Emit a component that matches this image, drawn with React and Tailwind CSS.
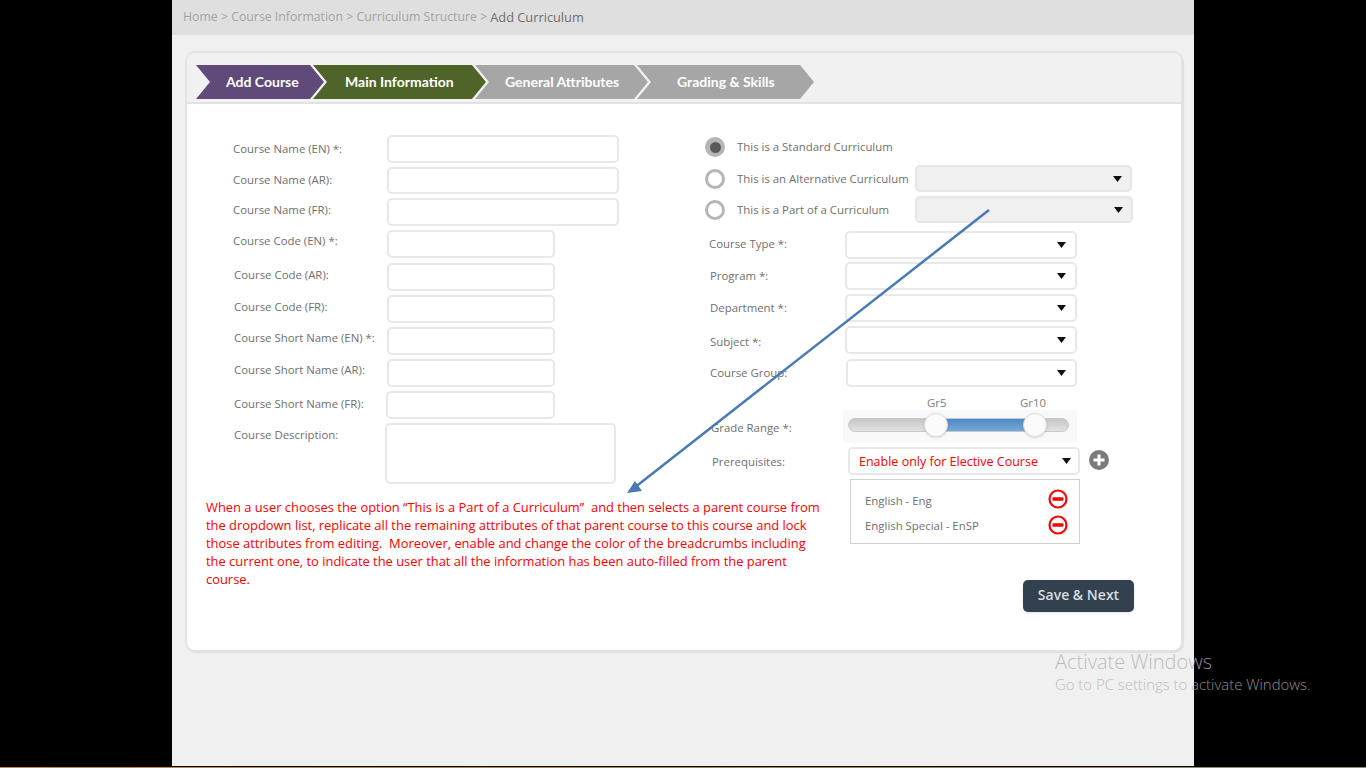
const lbl = "font-['Open_Sans',sans-serif] text-[11.400px] text-[#6f6f6f]";

const Caret = () => (
  <svg width="9" height="6" viewBox="0 0 9 6" className="shrink-0"><path d="M0 0H9L4.500 6Z" fill="#111" /></svg>
);

const Field = ({ w, h = 28, sel, grey, children }) => (
  <div style={{ width: w, height: h }} className={`flex shrink-0 items-center justify-end rounded-[5px] border-2 ${grey ? "border-[#e6e6e6] bg-[#f0f0f0] pr-[8px]" : "border-[#e8e8e8] bg-white"} ${sel && !grey ? (children ? "pr-[7px]" : "pr-[9px]") : ""}`}>
    {children}
    {sel && <Caret />}
  </div>
);

const LeftRow = ({ label, w, lx, fx, h = 28, top = 4, mt }) => (
  <div className="flex items-start" style={{ marginTop: mt }}>
    <div style={{ width: 181 + fx, paddingLeft: lx }} className="shrink-0">
      <div className={`${lbl} whitespace-nowrap leading-[16px]`} style={{ marginTop: top }}>{label}</div>
    </div>
    <Field w={w} h={h} />
  </div>
);

const Radio = ({ on }) => (
  <div className={`flex h-5 w-5 shrink-0 items-center justify-center rounded-full border-[3px] border-[#b5b5b5] ${on ? "bg-[#b5b5b5]" : "bg-white"}`}>
    {on && <div className="h-[11px] w-[11px] rounded-full bg-[#5a5a5a]" />}
  </div>
);

const RightRow = ({ label, lx, fx, w, mt, pt = 0, pb = 0 }) => (
  <div className="flex items-center" style={{ marginTop: mt }}>
    <div style={{ width: fx, paddingLeft: lx, paddingTop: pt, paddingBottom: pb }} className={`${lbl} shrink-0 whitespace-nowrap`}>{label}</div>
    <Field w={w} sel />
  </div>
);

const chevron = "polygon(0 0,calc(100% - 14px) 0,100% 50%,calc(100% - 14px) 100%,0 100%,14px 50%)";

const Step = ({ label, w, color, first, pl }) => (
  <div
    style={{ width: w, clipPath: chevron, paddingLeft: pl, marginLeft: first ? 0 : -11 }}
    className={`flex h-[34px] shrink-0 items-center pb-[2px] ${color} font-['Lato',sans-serif] text-[14px] font-bold text-white`}
  >
    {label}
  </div>
);

const MinusIcon = () => (
  <svg width="20" height="20" viewBox="0 0 20 20" className="shrink-0"><circle cx="10" cy="10" r="8.500" fill="white" stroke="#f00" strokeWidth="2.200" /><rect x="4.500" y="8.200" width="11" height="3.600" rx="0.800" fill="#f00" /></svg>
);

const redLines = [
  "When a user chooses the option “This is a Part of a Curriculum”  and then selects a parent course from",
  "the dropdown list, replicate all the remaining attributes of that parent course to this course and lock",
  "those attributes from editing.  Moreover, enable and change the color of the breadcrumbs including",
  "the current one, to indicate the user that all the information has been auto-filled from the parent",
  "course.",
];

export default function App() {
  return (
    <div className="relative flex h-[768px] w-full justify-center overflow-hidden bg-black">
      <div className="relative flex h-[766px] w-[1022px] flex-col bg-[#f0f0f0]">
        <div className="flex h-[35px] items-center bg-[#dfdfdf] pl-[11px] font-['Open_Sans',sans-serif] text-[#a3a3a3]">
          <span className="text-[12.300px]">Home &gt; Course Information &gt; Curriculum Structure &gt; </span>
          <span className="ml-[3px] text-[12.800px] text-[#6e6e6e]">Add Curriculum</span>
        </div>

        <div className="ml-[13px] mt-4 h-[601px] w-[998px] overflow-hidden rounded-[10px] border-2 border-[#e3e3e3] bg-white shadow-[1px_1px_1px_rgba(0,0,0,0.08)]">
          <div className="flex h-[51px] items-start border-b-2 border-[#e2e2e2] bg-[#f1f1f1] pl-[9px] pt-[12px]">
            <Step first label="Add Course" w={128} pl={30} color="bg-[#5f4a7a]" />
            <Step label="Main Information" w={173} pl={32} color="bg-[#4f6428]" />
            <Step label="General Attributes" w={173} pl={30} color="bg-[#a6a6a6]" />
            <Step label="Grading & Skills" w={177} pl={40} color="bg-[#a6a6a6]" />
          </div>

          <div className="flex items-start">
            <div className="w-[500px] shrink-0 pl-[19px] pt-[31px]">
              <LeftRow label="Course Name (EN) *:" lx={27} fx={0} w={232} top={6} />
              <LeftRow label="Course Name (AR):" lx={27} fx={0} w={232} h={27} mt={4} top={5} />
              <LeftRow label="Course Name (FR):" lx={27} fx={0} w={232} mt={4} />
              <LeftRow label="Course Code (EN) *:" lx={27} fx={0} w={168} mt={4} top={3} />
              <LeftRow label="Course Code (AR):" lx={28} fx={0} w={168} mt={5} />
              <LeftRow label="Course Code (FR):" lx={28} fx={0} w={168} mt={4} />
              <LeftRow label="Course Short Name (EN) *:" lx={28} fx={0} w={168} mt={4} top={3} />
              <LeftRow label="Course Short Name (AR):" lx={28} fx={0} w={168} mt={4} top={3} />
              <LeftRow label="Course Short Name (FR):" lx={28} fx={-1} w={169} mt={4} top={5} />
              <LeftRow label="Course Description:" lx={28} fx={-2} w={231} h={61} mt={4} top={4} />
              <div className="mt-[14px] whitespace-pre font-['Open_Sans',sans-serif] text-[12.920px] leading-[18px] text-[#f00]">
                {redLines.map((t) => <div key={t}>{t}</div>)}
              </div>
            </div>

            <div className="w-[480px] shrink-0 pl-[17px] pt-[33px]">
              <div className="flex items-center gap-[12px] pl-[1px]"><Radio on /><span className={lbl}>This is a Standard Curriculum</span></div>
              <div className="mt-[8px] flex items-center">
                <div className="flex w-[211px] shrink-0 items-center gap-[12px] pl-[1px]"><Radio /><span className={`${lbl} whitespace-nowrap`}>This is an Alternative Curriculum</span></div>
                <Field w={217} h={27} sel grey />
              </div>
              <div className="mt-[4px] flex items-center">
                <div className="flex w-[211px] shrink-0 items-center gap-[12px] pl-[1px]"><Radio /><span className={`${lbl} whitespace-nowrap`}>This is a Part of a Curriculum</span></div>
                <Field w={218} h={27} sel grey />
              </div>
              <RightRow label="Course Type *:" lx={5} fx={141} w={232} mt={8} pb={2} />
              <RightRow label="Program *:" lx={6} fx={141} w={232} mt={3} />
              <RightRow label="Department *:" lx={6} fx={141} w={232} mt={4} />
              <RightRow label="Subject *:" lx={6} fx={141} w={232} mt={4} pt={4} />
              <RightRow label="Course Group:" lx={6} fx={142} w={231} mt={5} pb={1} />

              <div className="mt-[4px] flex">
                <div className={`${lbl} w-[139px] shrink-0 pl-[7px] pt-[28px]`}>Grade Range *:</div>
                <div className="relative h-[52px] w-[234px] font-['Open_Sans',sans-serif] text-[11.400px] text-[#7d7d7d]">
                  <span className="absolute left-[84px] top-[3px]">Gr5</span>
                  <span className="absolute left-[177px] top-[3px]">Gr10</span>
                  <div className="absolute left-0 top-[19px] flex h-[33px] w-[234px] items-start bg-[#f8f9fa] px-[5px] pt-[8px]">
                    <div className="relative h-[14px] w-[221px] rounded-full border border-[#c8c8c8] bg-gradient-to-b from-[#c6c6c6] to-[#e2e2e2]">
                      <div className="absolute left-[87px] top-0 h-full w-[100px] bg-gradient-to-b from-[#4f8ac4] to-[#76a8d8]" />
                      <div className="absolute left-[75px] top-[-6px] h-6 w-6 rounded-full border border-[#dcdcdc] bg-[#fbfbfb] shadow" />
                      <div className="absolute left-[174px] top-[-6px] h-6 w-6 rounded-full border border-[#dcdcdc] bg-[#fbfbfb] shadow" />
                    </div>
                  </div>
                </div>
              </div>

              <div className="mt-[4px] flex items-start">
                <div className={`${lbl} w-[144px] shrink-0 pl-[8px] pt-[6px]`}>Prerequisites:</div>
                <Field w={232} sel>
                  <span className="mr-auto pl-[9px] pt-[2px] font-['Open_Sans',sans-serif] text-[12.500px] text-[#f00]">Enable only for Elective Course</span>
                </Field>
                <div className="ml-[9px] mt-[3px] flex h-5 w-5 items-center justify-center rounded-full bg-[#7b7b7b]">
                  <svg width="14" height="14" viewBox="0 0 14 14"><path d="M5.500 1.500H8.500V5.500H12.500V8.500H8.500V12.500H5.500V8.500H1.500V5.500H5.500Z" fill="white" /></svg>
                </div>
              </div>

              <div className="ml-[146px] mt-[4px] h-[65px] w-[230px] border border-[#d0d0d0] pl-[14px] pr-[11px] pt-[7px]">
                <div className={`flex h-[24px] items-center justify-between ${lbl}`}><span className="mt-[3px]">English - Eng</span><MinusIcon /></div>
                <div className={`mt-[2px] flex h-[24px] items-center justify-between ${lbl}`}><span className="mt-[2px]">English Special - EnSP</span><MinusIcon /></div>
              </div>

              <div className="ml-[319px] mt-[36px] flex h-[32px] w-[111px] items-center justify-center rounded-[5px] bg-[#33414f] pb-[3px] font-['Open_Sans',sans-serif] text-[14px] font-semibold text-[#d8dde0] shadow-sm">
                Save &amp; Next
              </div>
            </div>
          </div>
        </div>

        <svg className="pointer-events-none absolute left-0 top-0" width="1022" height="766">
          <line x1="817" y1="210" x2="462" y2="488" stroke="#4a7ab5" strokeWidth="2.500" />
          <path d="M455 493L463 481L470 491Z" fill="#4a7ab5" />
        </svg>
      </div>

      <div className="pointer-events-none absolute left-[1055px] top-[650px] font-['Open_Sans',sans-serif] font-light text-[#b0b0b0] opacity-80">
        <div className="text-[20px] leading-[24px]">Activate Windows</div>
        <div className="text-[14.900px] leading-[20px]">Go to PC settings to activate Windows.</div>
      </div>

      <div className="absolute bottom-0 left-0 h-px w-full bg-gradient-to-r from-[#c08f3a] via-[#a88a40] to-[#8f8a70]" />
    </div>
  );
}
